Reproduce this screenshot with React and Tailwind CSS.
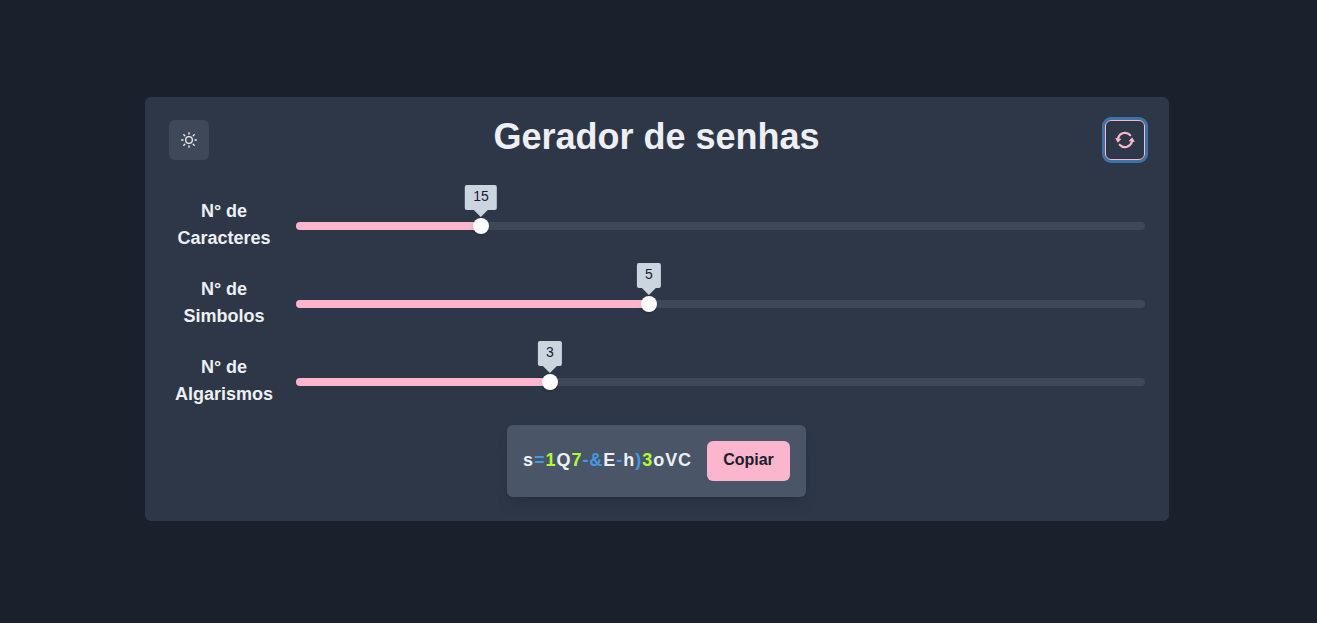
import { FiSun } from "react-icons/fi";

const sliders = [
  { label: "Caracteres", value: 15, fill: "w-[185px]" },
  { label: "Simbolos", value: 5, fill: "w-[353px]" },
  { label: "Algarismos", value: 3, fill: "w-[254px]" },
];

const password = [
  ["s", "text-[#eeeff2]"], ["=", "text-[#4299e1]"], ["1", "text-[#adff2f]"], ["Q", "text-[#eeeff2]"],
  ["7", "text-[#adff2f]"], ["-&", "text-[#4299e1]"], ["E", "text-[#eeeff2]"], ["-", "text-[#4299e1]"],
  ["h", "text-[#eeeff2]"], [")", "text-[#4299e1]"], ["3", "text-[#adff2f]"], ["oVC", "text-[#eeeff2]"],
];

function RepeatIcon() {
  return (
    <svg viewBox="0 0 24 24" className="size-5" fill="currentColor">
      <path d="M10.319,4.936a7.239,7.239,0,0,1,7.1,2.252,1.25,1.25,0,1,0,1.872-1.657A9.737,9.737,0,0,0,9.743,2.5,10.269,10.269,0,0,0,2.378,9.61a.249.249,0,0,1-.271.178l-1.033-.13A.491.491,0,0,0,.6,9.877a.5.5,0,0,0-.019.526l2.476,4.342a.5.5,0,0,0,.373.248.43.43,0,0,0,.062,0,.5.5,0,0,0,.359-.152l3.477-3.593a.5.5,0,0,0-.3-.844L5.15,10.172a.25.25,0,0,1-.2-.333A7.7,7.7,0,0,1,10.319,4.936Z" />
      <path d="M23.406,14.1a.5.5,0,0,0,.015-.526l-2.5-4.329A.5.5,0,0,0,20.546,9a.489.489,0,0,0-.421.151l-3.456,3.614a.5.5,0,0,0,.3.842l1.848.221a.249.249,0,0,1,.183.117.253.253,0,0,1,.023.216,7.688,7.688,0,0,1-5.369,4.9,7.243,7.243,0,0,1-7.1-2.253,1.25,1.25,0,1,0-1.872,1.656,9.74,9.74,0,0,0,9.549,3.03,10.261,10.261,0,0,0,7.369-7.12.251.251,0,0,1,.27-.179l1.058.127a.422.422,0,0,0,.06,0A.5.5,0,0,0,23.406,14.1Z" />
    </svg>
  );
}

function Slider({ label, value, fill }) {
  return (
    <div className="flex h-[54px] items-center">
      <div className="w-[110px] pb-0.5 text-center text-lg font-bold leading-[27px]">
        N° de<br />{label}
      </div>
      <div className="ml-[17px] h-2 flex-1 rounded-full bg-[#3f4858]">
        <div className={`relative h-2 rounded-l-full bg-[#fbb6ce] ${fill}`}>
          <div className="absolute -right-2 -top-1 size-4 rounded-full bg-white shadow" />
          <div className="absolute -top-[37px] right-0 flex h-[25px] translate-x-1/2 justify-center rounded-xs bg-[#cbd5e0] px-2 text-sm leading-[22px] text-[#1a202c]">
            {value}
            <div className="absolute left-1/2 top-[25px] -ml-[7px] border-x-[7px] border-t-[7px] border-x-transparent border-t-[#cbd5e0]" />
          </div>
        </div>
      </div>
    </div>
  );
}

export default function App() {
  return (
    <div className="h-screen bg-[#1a202c] pl-[145px] pt-[97px] font-['Liberation_Sans',sans-serif] text-[#eeeff2]">
      <main className="h-[424px] w-[1024px] rounded-md bg-[#2d3748] px-6 pt-[23px]">
        <header className="flex h-10 items-center justify-between">
          <button className="flex size-10 items-center justify-center rounded-md bg-[#3f4858]">
            <FiSun size={16} />
          </button>
          <h1 className="-mt-[7px] pr-px text-4xl font-bold leading-10">Gerador de senhas</h1>
          <button className="flex size-10 items-center justify-center rounded-md border border-[#fbb6ce] text-[#fbb6ce] ring-3 ring-[#3c74a8]">
            <RepeatIcon />
          </button>
        </header>
        <div className="mt-[39px] flex flex-col gap-6">
          {sliders.map((s) => <Slider key={s.label} {...s} />)}
        </div>
        <div className="ml-[338px] mt-[16px] flex h-[72px] w-[299px] items-center justify-between rounded-md bg-[#4a5568] px-4 shadow-lg">
          <div className="pb-0.5 text-lg font-bold tracking-[0.96px]">
            {password.map(([text, color], i) => <span key={i} className={color}>{text}</span>)}
          </div>
          <button className="h-10 w-[83px] rounded-md bg-[#fbb6ce] pb-0.5 text-base font-bold text-[#1a202c]">Copiar</button>
        </div>
      </main>
    </div>
  );
}
